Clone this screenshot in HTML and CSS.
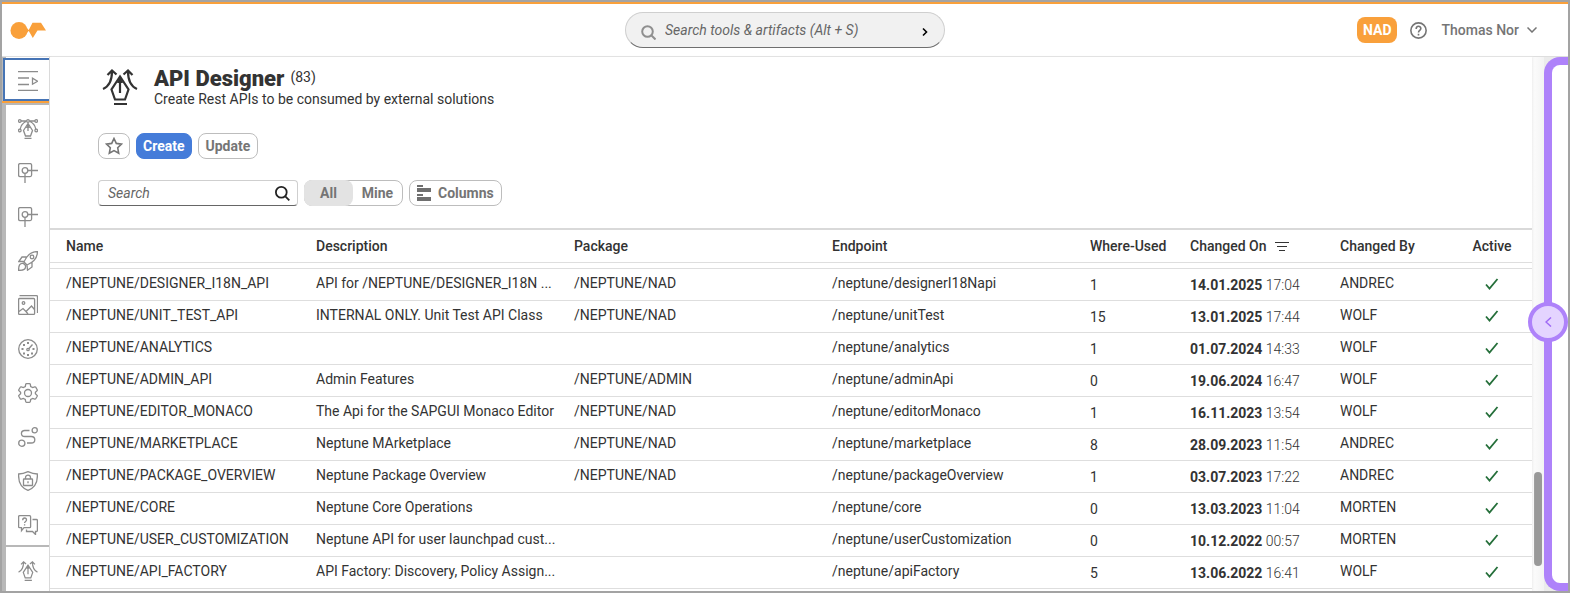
FILE: index.html
```
<!DOCTYPE html>
<html lang="en">
<head>
<meta charset="utf-8">
<title>API Designer</title>
<link rel="stylesheet" href="styles.css">
</head>
<body>
<svg class="defs" aria-hidden="true">
  <symbol id="check" viewBox="0 0 14 12"><path d="M1 6.500l3.500 4L12.500 1" fill="none" stroke="currentColor" stroke-width="1.800"/></symbol>
  <symbol id="api" viewBox="0 0 36 36"><path d="M18 7.500L9.500 20.500l3.500 10h10l3.500-10zM18 10v14M12 35h13M1 20c6-2.500 9-8 9-18M5.500 6l4.500-4.500 4.500 4M35 20c-6-2.500-9-8-9-18M30.500 6L26 1.500l-4.500 4"/><path d="M18 7l-3 7h6z" fill="currentColor" stroke="none"/></symbol>
  <symbol id="node" viewBox="0 0 20 20"><rect x=".6" y=".6" width="13" height="13" rx="1.500"/><circle cx="7" cy="7.500" r="2.800"/><path d="M10 7.500h10M7 10.300V20"/></symbol>
</svg>
<header class="shell">
  <a class="logo" href="#" aria-label="Home"><svg viewBox="0 0 36 17" width="36" height="17"><circle cx="9" cy="8.500" r="8.500"/><path d="M17 6l2 2.500-2 2.500zM18.500 8.500L22.500.7H31l5 7.800h-8.500L22.800 16z"/></svg></a>
  <div class="finder">
    <svg viewBox="0 0 15 15" width="15" height="15"><circle cx="6.500" cy="6.500" r="5.300"/><path d="M10.500 10.500l4 4"/></svg>
    <input type="text" aria-label="Search tools and artifacts" placeholder="Search tools &amp; artifacts (Alt + S)">
    <button aria-label="Go"><svg viewBox="0 0 6 10" width="6" height="10"><path d="M1 1.500L4.500 5 1 8.500"/></svg></button>
  </div>
  <div class="account">
    <button class="badge">NAD</button>
    <button class="help" aria-label="Help"><svg viewBox="0 0 16 16" width="17" height="17"><circle cx="8" cy="8" r="7.200"/><path d="M5.800 6.500C5.800 3.200 10.200 3.300 10.200 6.200 10.200 8 8 7.800 8 9.800M8 11v1.700"/></svg></button>
    <button class="user">Thomas Nor<svg viewBox="0 0 10 6" width="10" height="6"><path d="M.5.500L5 5 9.500.500"/></svg></button>
  </div>
</header>
<div class="body">
  <nav class="side" aria-label="Tools">
    <button class="menu" aria-label="Expand menu"><svg viewBox="0 0 20 20"><path d="M0 .6h20M0 7h11M0 13.500h11M0 19.400h20M14.500 7.200v6l5-3z"/></svg></button>
    <div class="tools">
      <a href="#" aria-label="Designer"><svg viewBox="0 0 20 20"><circle cx="1.800" cy="2" r="1.300"/><circle cx="10" cy="2" r="1.300"/><circle cx="18.200" cy="2" r="1.300"/><circle cx="1.800" cy="11.500" r="1.300"/><circle cx="18.200" cy="11.500" r="1.300"/><path d="M3 2h5.700M11.300 2H17M8 2.500Q3 5 2.300 10M12 2.500q5 2.500 5.700 7.500M10 4.500L5.500 11.500l2 5.500h5l2-5.500zM10 6v6M6.500 19.400h7"/><path d="M10 4.500L7.800 9h4.400z" fill="currentColor" stroke="none"/></svg></a>
      <a href="#" aria-label="Components"><svg><use href="#node"/></svg></a>
      <a href="#" aria-label="Templates"><svg><use href="#node"/></svg></a>
      <a href="#" aria-label="Launch"><svg viewBox="0 0 20 20"><path d="M19.400.600C13 .500 9 4 6 11l3 3c7-3 10.500-7 10.400-13.400zM8.500 6H4L.8 10.500h5M14 11.500V16l-4.500 3.200-.5-5.200M5.500 12.500C1.500 12 .6 14.500.6 19.400c5 0 7.400-1 6.900-4.900z"/><circle cx="14" cy="6" r="1.800"/></svg></a>
      <a href="#" aria-label="Media"><svg viewBox="0 0 20 20"><rect x=".6" y="3.500" width="16" height="15.900" rx="1"/><path d="M1.500.700h17q1 0 1 1V18M1 16.500l4-3 3 3L13.500 11l3 3.500M8 16.500l2 2.500"/><circle cx="5.500" cy="8" r="1.300"/></svg></a>
      <a href="#" aria-label="Performance"><svg viewBox="0 0 20 20"><circle cx="10" cy="10" r="9.300"/><circle cx="10" cy="10.500" r="1.200"/><path d="M10.800 9.700l3.700-4.200"/><path d="M9 4h2M3.500 10h2M14.500 10h2M5 6h2M5 14.500h2M13 14.500h2M9 16h2" stroke-width="2"/></svg></a>
      <a href="#" aria-label="Settings"><svg viewBox="0 0 20 20"><path d="M8.500.7h3q.7 0 .8.800l.4 2 2 1.100 2-.7q.7-.2 1 .3l1.500 2.600q.3.600-.2 1l-1.600 1.400v1.600l1.600 1.400q.5.400.2 1l-1.500 2.600q-.3.500-1 .3l-2-.7-2 1.100-.4 2q-.1.800-.8.800h-3q-.7 0-.8-.8l-.4-2-2-1.100-2 .7q-.7.200-1-.3L.8 13.200q-.3-.6.200-1l1.600-1.400V9.200L1 7.800q-.5-.4-.2-1l1.500-2.600q.3-.5 1-.3l2 .7 2-1.100.4-2q.1-.8.8-.8z"/><circle cx="10" cy="10" r="3.500"/></svg></a>
      <a href="#" aria-label="Flows"><svg viewBox="0 0 20 20"><circle cx="3.800" cy="16.200" r="3.100"/><circle cx="16.700" cy="3.300" r="2.600"/><path d="M11.500 3.500H6.800c-4.500 0-4.500 6 0 6h6.400c4.800 0 4.800 6.500 0 6.500H9"/></svg></a>
      <a href="#" aria-label="Security"><svg viewBox="0 0 20 20"><path d="M10 .7Q5 3 .7 3c-.5 7 .9 13 9.300 16.300C18.400 16 19.800 10 19.300 3 15 3 10 .7 10 .7z"/><rect x="5.500" y="8" width="9" height="6.500" rx=".5"/><path d="M7.500 8V6.500c0-3.300 5-3.300 5 0V8M10 10.300v2"/></svg></a>
      <a href="#" aria-label="Support"><svg viewBox="0 0 20 20"><path d="M1.600.700h10q1 0 1 1v10q0 1-1 1H6l-2.500 3v-3H1.600q-1 0-1-1v-10q0-1 1-1zM14.500 4.500h4q.9 0 .9 1v10q0 1-.9 1h-1v3l-3-3H8.500v-2M4.700 5.200c0-3 3.800-2.800 3.800-.2 0 1.500-1.900 1.500-1.900 3M6.600 9.200v1.300"/></svg></a>
    </div>
    <a class="last" href="#" aria-label="API Designer"><svg stroke-width="2.200"><use href="#api"/></svg></a>
  </nav>
  <main>
    <section class="top">
      <div class="heading">
        <svg class="api"><use href="#api"/></svg>
        <div>
          <div class="title"><h1>API Designer</h1><span>(83)</span></div>
          <p>Create Rest APIs to be consumed by external solutions</p>
        </div>
      </div>
      <div class="bar actions">
        <button class="btn star" aria-label="Favorite"><svg viewBox="0 0 18 18" width="18" height="18"><path d="M9 1.500l2.300 4.900 5.200.7-3.800 3.700 1 5.400L9 13.600l-4.700 2.600 1-5.400L1.500 7.100l5.200-.7z"/></svg></button>
        <button class="btn primary">Create</button>
        <button class="btn">Update</button>
      </div>
      <div class="bar">
        <div class="search"><input type="text" aria-label="Search" placeholder="Search"><button aria-label="Search"><svg viewBox="0 0 15 15" width="15" height="15"><circle cx="6.300" cy="6.300" r="5.400"/><path d="M10.300 10.300l4 4"/></svg></button></div>
        <div class="segment"><button class="on">All</button><button>Mine</button></div>
        <button class="btn columns"><svg viewBox="0 0 14 16" width="14" height="16"><path d="M0 0h6v2H0zM0 3h14v4H0zM0 9h6v2H0zM0 12h14v4H0z"/></svg>Columns</button>
      </div>
    </section>
    <div class="list">
      <table>
        <colgroup><col><col><col><col><col class="c-used"><col class="c-on"><col class="c-by"><col class="c-active"></colgroup>
        <thead><tr><th>Name</th><th>Description</th><th>Package</th><th>Endpoint</th><th>Where-Used</th><th>Changed On<svg viewBox="0 0 14 10" width="14" height="10"><path d="M0 1.500h14M2 5.500h10M4 9.500h6"/></svg></th><th>Changed By</th><th>Active</th></tr></thead>
        <tbody>
          <tr class="gap"><td colspan="8"></td></tr>
          <tr><td>/NEPTUNE/DESIGNER_I18N_API</td><td>API for /NEPTUNE/DESIGNER_I18N ...</td><td>/NEPTUNE/NAD</td><td>/neptune/designerI18Napi</td><td>1</td><td><b>14.01.2025</b> 17:04</td><td>ANDREC</td><td><svg><use href="#check"/></svg></td></tr>
          <tr><td>/NEPTUNE/UNIT_TEST_API</td><td>INTERNAL ONLY. Unit Test API Class</td><td>/NEPTUNE/NAD</td><td>/neptune/unitTest</td><td>15</td><td><b>13.01.2025</b> 17:44</td><td>WOLF</td><td><svg><use href="#check"/></svg></td></tr>
          <tr><td>/NEPTUNE/ANALYTICS</td><td></td><td></td><td>/neptune/analytics</td><td>1</td><td><b>01.07.2024</b> 14:33</td><td>WOLF</td><td><svg><use href="#check"/></svg></td></tr>
          <tr><td>/NEPTUNE/ADMIN_API</td><td>Admin Features</td><td>/NEPTUNE/ADMIN</td><td>/neptune/adminApi</td><td>0</td><td><b>19.06.2024</b> 16:47</td><td>WOLF</td><td><svg><use href="#check"/></svg></td></tr>
          <tr><td>/NEPTUNE/EDITOR_MONACO</td><td>The Api for the SAPGUI Monaco Editor</td><td>/NEPTUNE/NAD</td><td>/neptune/editorMonaco</td><td>1</td><td><b>16.11.2023</b> 13:54</td><td>WOLF</td><td><svg><use href="#check"/></svg></td></tr>
          <tr><td>/NEPTUNE/MARKETPLACE</td><td>Neptune MArketplace</td><td>/NEPTUNE/NAD</td><td>/neptune/marketplace</td><td>8</td><td><b>28.09.2023</b> 11:54</td><td>ANDREC</td><td><svg><use href="#check"/></svg></td></tr>
          <tr><td>/NEPTUNE/PACKAGE_OVERVIEW</td><td>Neptune Package Overview</td><td>/NEPTUNE/NAD</td><td>/neptune/packageOverview</td><td>1</td><td><b>03.07.2023</b> 17:22</td><td>ANDREC</td><td><svg><use href="#check"/></svg></td></tr>
          <tr><td>/NEPTUNE/CORE</td><td>Neptune Core Operations</td><td></td><td>/neptune/core</td><td>0</td><td><b>13.03.2023</b> 11:04</td><td>MORTEN</td><td><svg><use href="#check"/></svg></td></tr>
          <tr><td>/NEPTUNE/USER_CUSTOMIZATION</td><td>Neptune API for user launchpad cust...</td><td></td><td>/neptune/userCustomization</td><td>0</td><td><b>10.12.2022</b> 00:57</td><td>MORTEN</td><td><svg><use href="#check"/></svg></td></tr>
          <tr><td>/NEPTUNE/API_FACTORY</td><td>API Factory: Discovery, Policy Assign...</td><td></td><td>/neptune/apiFactory</td><td>5</td><td><b>13.06.2022</b> 16:41</td><td>WOLF</td><td><svg><use href="#check"/></svg></td></tr>
        </tbody>
      </table>
    </div>
  </main>
  <div class="gutter"><div class="thumb"></div></div>
  <aside class="drawer">
    <div class="frame"></div>
    <button aria-label="Open panel"><svg viewBox="0 0 7 10" width="7" height="10"><path d="M6 .500L1 5l5 4.500"/></svg></button>
  </aside>
</div>
</body>
</html>
```
FILE: styles.css
```
* { box-sizing: border-box; }
body {
  margin: 0;
  height: 100vh;
  display: flex;
  flex-direction: column;
  overflow: hidden;
  border: 2px solid #a3a3a3;
  background: #fff;
  color: #333;
  font: 14px/18px Roboto, "Liberation Sans", sans-serif;
}
button, input { font: inherit; color: inherit; margin: 0; padding: 0; border: 0; background: none; outline: 0; }
svg { display: block; flex: none; fill: none; stroke: currentColor; }
.defs { position: absolute; width: 0; height: 0; }

.shell {
  flex: none;
  height: 55px;
  display: grid;
  grid-template-columns: 1fr 320px 1fr;
  align-items: center;
  border-top: 2px solid #f9a03b;
  border-bottom: 1px solid #dedede;
}
.logo { margin-left: 8px; justify-self: start; }
.logo svg { fill: #f9a03b; stroke: none; }
.finder {
  height: 36px;
  display: flex;
  align-items: center;
  padding: 0 16px 0 15px;
  gap: 9px;
  border: 1px solid #cfcfcf;
  border-bottom-color: #6f6f6f;
  border-radius: 18px;
  background: #f1f1f1;
}
.finder > svg { color: #8f8f8f; stroke-width: 2; margin-top: 4px; }
.finder input { flex: 1; min-width: 0; }
.finder button { color: #000; stroke-width: 1.6; margin-top: 3px; }
input::placeholder { color: #666; font-style: italic; opacity: 1; }
.account { display: flex; justify-content: flex-end; align-items: center; padding-right: 31px; color: #757575; font-weight: 500; }
.badge { height: 26px; padding: 0 6px; border-radius: 8px; background: #f9a03b; color: #fff; font-weight: 700; }
.help { margin: 0 14px 0 13px; stroke-width: 1.5; }
.user { display: flex; align-items: center; gap: 8px; stroke-width: 1.5; }

.body { flex: 1; min-height: 0; display: flex; }
.side {
  width: 48px;
  flex: none;
  display: flex;
  flex-direction: column;
  border-right: 1px solid #d9d9d9;
  border-left: 4px solid #b8b8b8;
  color: #8c8c8c;
  stroke-width: 1.3;
}
.side svg { width: 20px; height: 20px; }
.menu {
  height: 43px;
  margin-left: -3px;
  margin-top: 1px;
  display: flex;
  align-items: center;
  padding: 2px 0 0 13px;
  border: 2px solid #4674b5;
  border-right: 0;
  background: #fff;
}
.tools { flex: 1; margin-left: -4px; padding: 16px 0 0 16px; border-top: 2px solid #f9a03b; display: flex; flex-direction: column; gap: 24px; box-shadow: inset 4px 0 #b8b8b8, inset 0 2px #b8b8b8; }
.last { border-top: 2px solid #b8b8b8; padding: 14px 0 10px 12px; }
.side a { color: inherit; }

main { flex: 1; min-width: 0; display: flex; flex-direction: column; box-shadow: 1px 0 2px #ececec; z-index: 1; background: #fff; }
.top { padding: 11px 48px 22px; border-bottom: 2px solid #d9d9d9; }
.heading { display: flex; gap: 16px; padding-left: 4px; }
.api { width: 36px; height: 36px; stroke-width: 2.2; margin-top: 1px; }
.title { display: flex; gap: 6px; line-height: 22px; }
h1 { margin: 0; font-size: 22px; line-height: 22px; font-weight: 900; }
.title span { line-height: 18px; }
p { margin: 0; line-height: 18px; }
.bar { display: flex; gap: 6px; }
.actions { margin: 25px 0 21px; }
.btn, .segment { height: 26px; border: 1px solid #bdbdbd; border-radius: 8px; color: #757575; font-weight: 700; }
.btn { padding: 0 7px; }
.star { width: 32px; padding: 0 6px; stroke-width: 1.6; }
.primary { padding: 0 6px; background: #457cd9; border-color: #457cd9; color: #fff; }
.search { width: 200px; height: 26px; display: flex; align-items: center; padding: 0 7px 0 9px; border: 1px solid #cfcfcf; border-bottom-color: #666; border-radius: 4px; }
.search input { flex: 1; min-width: 0; }
.search button { color: #222; stroke-width: 1.8; }
.segment { display: flex; }
.segment button { width: 49px; }
.segment .on { margin: -1px 0 -1px -1px; background: #e3e3e3; border-radius: 8px; }
.columns { display: flex; align-items: center; gap: 7px; }
.columns svg { fill: #6f6f6f; stroke: none; }

.list { flex: 1; min-height: 0; overflow: hidden; }
table { width: 100%; table-layout: fixed; border-collapse: separate; border-spacing: 0; }
.c-used { width: 100px; }
.c-on { width: 150px; }
.c-by { width: 120px; }
.c-active { width: 80px; }
th, td { height: 32px; padding: 0 8px 3px; border-bottom: 1px solid #dedede; text-align: left; font-weight: 400; white-space: nowrap; overflow: hidden; }
th { height: 33px; padding-bottom: 0; font-weight: 500; }
th:first-child, td:first-child { padding-left: 16px; }
th svg { display: inline-block; margin-left: 8px; }
.gap td { height: 6px; padding: 0; }
td:nth-child(5) { padding-bottom: 0; }
td:nth-child(6) { padding-bottom: 0; font-weight: 300; }
b { font-weight: 700; }
th:last-child, td:last-child { text-align: center; }
td:last-child { padding-bottom: 1px; }
td:last-child svg { width: 14px; height: 12px; margin: 0 auto; color: #256f3a; }

.gutter { width: 12px; flex: none; padding: 0 2px; background: linear-gradient(90deg, #fdfdfd, #f3f3f3); display: flex; flex-direction: column; justify-content: flex-end; }
.thumb { height: 94px; margin-bottom: 25px; border-radius: 4px; background: #999; }
.drawer { position: relative; z-index: 2; width: 24px; flex: none; display: flex; background: #ebebeb; }
.frame { flex: 1; border: 8px solid #ae82fa; border-right: 0; border-radius: 16px 0 0 16px; background: #fff; }
.drawer button {
  position: absolute;
  right: 0;
  top: 50%;
  width: 40px;
  height: 40px;
  margin-top: -22px;
  display: grid;
  place-items: center;
  border: 4px solid #ae82fa;
  border-radius: 50%;
  background: #e4d4ff;
  color: #a06bf5;
  stroke-width: 1.5;
}
```
